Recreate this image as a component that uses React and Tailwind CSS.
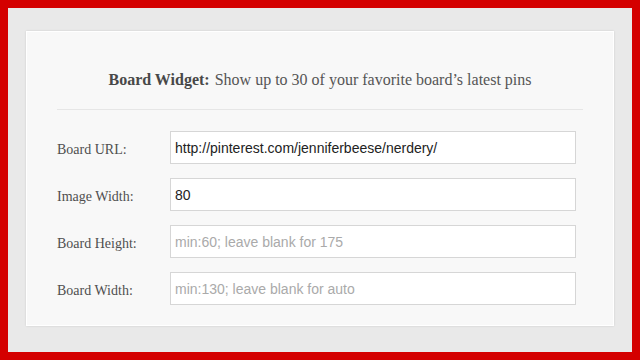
import React from 'react';

const fields = [
  { label: 'Board URL:', value: 'http://pinterest.com/jenniferbeese/nerdery/' },
  { label: 'Image Width:', value: '80' },
  { label: 'Board Height:', placeholder: 'min:60; leave blank for 175' },
  { label: 'Board Width:', placeholder: 'min:130; leave blank for auto' },
];

const App = () => {
  return (
    <div className="w-[640px] h-[360px] bg-[#d40000] p-2">
      <div className="w-full h-full bg-[#e9e9e9] pt-[23px] px-[18px]">
        {/* Card */}
        <div className="h-[295px] bg-[#f8f8f8] border border-white shadow-[0_0_2px_rgba(0,0,0,0.12)] px-[30px]">
          <h2 className="h-[77px] flex items-center justify-center pt-[18px] text-[16px] text-[#555] font-['Liberation_Serif',serif]">
            <span className="font-bold text-[#484848] mr-[5px]">Board Widget:</span>
            Show up to 30 of your favorite board’s latest pins
          </h2>
          <div className="border-t border-[#e6e6e6]" />

          <form className="flex flex-col gap-[14px] pt-[21px]">
            {fields.map((f) => (
              <div key={f.label} className="flex items-center">
                <label className="w-[113px] pt-[3px] text-[14px] text-[#4f4f4f] font-['Liberation_Serif',serif]">
                  {f.label}
                </label>
                <input
                  type="text"
                  defaultValue={f.value}
                  placeholder={f.placeholder}
                  className="w-[406px] h-[33px] bg-white border border-[#d6d6d6] px-[4px] text-[14px] text-[#222] placeholder:text-[#aaa] font-['Liberation_Sans',sans-serif] focus:outline-none"
                />
              </div>
            ))}
          </form>
        </div>
      </div>
    </div>
  );
};

export default App;
